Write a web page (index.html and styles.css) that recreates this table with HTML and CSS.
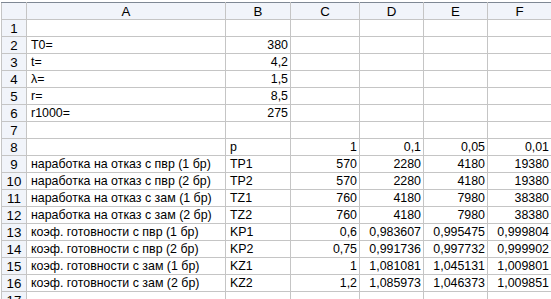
FILE: index.html
```html
<!DOCTYPE html>
<html>
<head>
<meta charset="utf-8">
<link rel="stylesheet" href="styles.css">
</head>
<body>
<div class="sheet">
<table class="grid">
<colgroup>
<col class="c-rn"><col class="c-a"><col class="c-b"><col class="c-c"><col class="c-d"><col class="c-e"><col class="c-f">
</colgroup>
<thead>
<tr class="hdr"><th class="corner"></th><th>A</th><th>B</th><th>C</th><th>D</th><th>E</th><th>F</th></tr>
</thead>
<tbody>
<tr><th>1</th><td></td><td></td><td></td><td></td><td></td><td></td></tr>
<tr><th>2</th><td>T0=</td><td class="n">380</td><td></td><td></td><td></td><td></td></tr>
<tr><th>3</th><td>t=</td><td class="n">4,2</td><td></td><td></td><td></td><td></td></tr>
<tr><th>4</th><td>λ=</td><td class="n">1,5</td><td></td><td></td><td></td><td></td></tr>
<tr><th>5</th><td>r=</td><td class="n">8,5</td><td></td><td></td><td></td><td></td></tr>
<tr><th>6</th><td>r1000=</td><td class="n">275</td><td></td><td></td><td></td><td></td></tr>
<tr><th>7</th><td></td><td></td><td></td><td></td><td></td><td></td></tr>
<tr><th>8</th><td></td><td>p</td><td class="n">1</td><td class="n">0,1</td><td class="n">0,05</td><td class="n">0,01</td></tr>
<tr><th>9</th><td>наработка на отказ с пвр (1 бр)</td><td>TP1</td><td class="n">570</td><td class="n">2280</td><td class="n">4180</td><td class="n">19380</td></tr>
<tr><th>10</th><td>наработка на отказ с пвр (2 бр)</td><td>TP2</td><td class="n">570</td><td class="n">2280</td><td class="n">4180</td><td class="n">19380</td></tr>
<tr><th>11</th><td>наработка на отказ с зам (1 бр)</td><td>TZ1</td><td class="n">760</td><td class="n">4180</td><td class="n">7980</td><td class="n">38380</td></tr>
<tr><th>12</th><td>наработка на отказ с зам (2 бр)</td><td>TZ2</td><td class="n">760</td><td class="n">4180</td><td class="n">7980</td><td class="n">38380</td></tr>
<tr><th>13</th><td>коэф. готовности с пвр (1 бр)</td><td>KP1</td><td class="n">0,6</td><td class="n">0,983607</td><td class="n">0,995475</td><td class="n">0,999804</td></tr>
<tr><th>14</th><td>коэф. готовности с пвр (2 бр)</td><td>KP2</td><td class="n">0,75</td><td class="n">0,991736</td><td class="n">0,997732</td><td class="n">0,999902</td></tr>
<tr><th>15</th><td>коэф. готовности с зам (1 бр)</td><td>KZ1</td><td class="n">1</td><td class="n">1,081081</td><td class="n">1,045131</td><td class="n">1,009801</td></tr>
<tr><th>16</th><td>коэф. готовности с зам (2 бр)</td><td>KZ2</td><td class="n">1,2</td><td class="n">1,085973</td><td class="n">1,046373</td><td class="n">1,009851</td></tr>
<tr><th>17</th><td></td><td></td><td></td><td></td><td></td><td></td></tr>
</tbody>
</table>
</div>
</body>
</html>
```
FILE: styles.css
```css
html, body {
  margin: 0;
  padding: 0;
  background: #ffffff;
  overflow: hidden;
}
.sheet {
  width: 551px;
  height: 299px;
  overflow: hidden;
  padding-top: 2px;
  padding-left: 1px;
  box-sizing: border-box;
}
.grid {
  border-collapse: collapse;
  table-layout: fixed;
  width: 550px;
  font-family: "Liberation Sans", Arial, sans-serif;
  font-size: 12.4px;
  color: #000;
  -webkit-font-smoothing: none;
}
.c-rn { width: 25px; }
.c-a { width: 199px; }
.c-b { width: 65px; }
.c-c { width: 69px; }
.c-d { width: 64px; }
.c-e { width: 64px; }
.c-f { width: 64px; }
.grid tr { height: 17px; }
.grid td, .grid th {
  border: 1px solid #c5c5c5;
  padding: 0 2px 0 4px;
  height: 16px;
  line-height: 15px;
  white-space: nowrap;
  overflow: hidden;
  vertical-align: bottom;
  font-weight: normal;
}
.grid th {
  background: #f1f4fa;
  text-align: center;
  padding: 0;
  font-size: 13.3px;
}
.grid thead th {
  border-top: 1px solid #7f8894;
}
.grid td { text-align: left; }
.grid td.n { text-align: right; }
```
